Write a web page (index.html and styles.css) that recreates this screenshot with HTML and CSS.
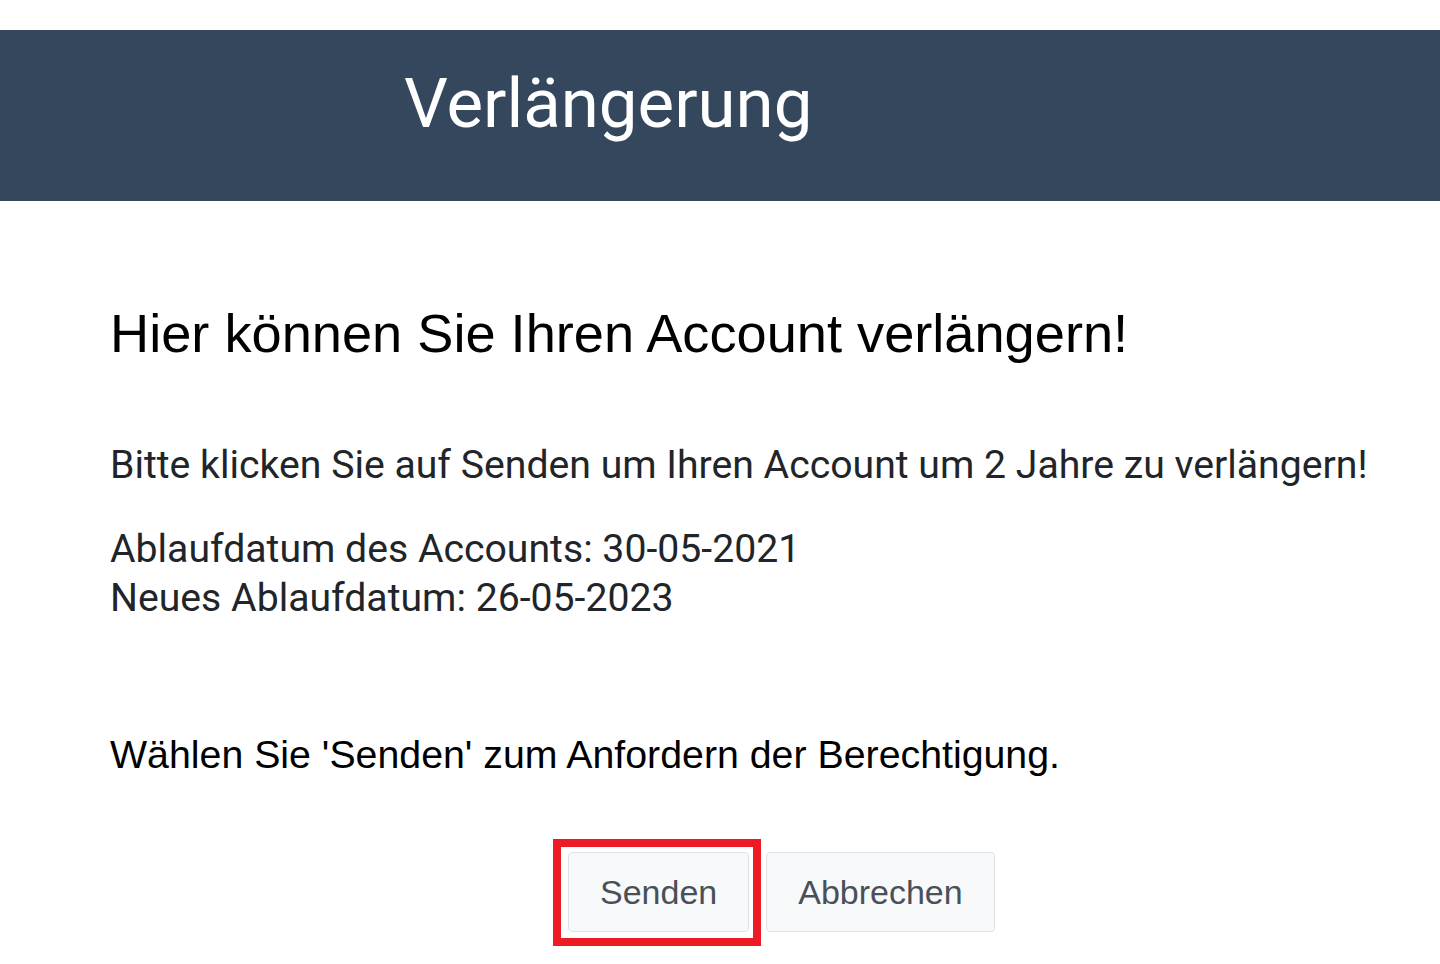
FILE: index.html
```html
<!DOCTYPE html>
<html lang="de">
<head>
    <meta charset="UTF-8">
    <meta name="viewport" content="width=device-width, initial-scale=1.0">
    <title>Verlängerung</title>
    <link rel="stylesheet" href="styles.css">
</head>
<body>
    <div class="header">
        <h1>Verlängerung</h1>
    </div>
    <div class="content">
        <h2>Hier können Sie Ihren Account verlängern!</h2>
        <p class="info">Bitte klicken Sie auf Senden um Ihren Account um 2 Jahre zu verlängern!</p>
        <p class="dates">Ablaufdatum des Accounts: 30-05-2021<br>Neues Ablaufdatum: 26-05-2023</p>
        <p class="hint">Wählen Sie 'Senden' zum Anfordern der Berechtigung.</p>
        <div class="actions">
            <div class="marked">
                <button class="btn">Senden</button>
            </div>
            <button class="btn">Abbrechen</button>
        </div>
    </div>
</body>
</html>
```

FILE: styles.css
```css
body {
    margin: 0;
    padding-top: 30px;
    background: #fff;
    font-family: Roboto, "Liberation Sans", sans-serif;
    color: #212529;
}
.header {
    background-color: #34475c;
    height: 171px;
    box-sizing: border-box;
    padding: 34px 0 0 404px;
}
.header h1 {
    margin: 0;
    font-family: Roboto, sans-serif;
    font-weight: 400;
    font-size: 69px;
    line-height: 80px;
    color: #fff;
}
.content {
    padding: 0 0 30px 110px;
}
h2 {
    margin: 101px 0 0;
    font-family: "Liberation Sans", Arial, sans-serif;
    font-weight: 400;
    font-size: 54.2px;
    line-height: 62px;
    color: #000;
}
.info, .dates {
    font-size: 39.2px;
    line-height: 49px;
}
.info {
    margin: 77px 0 0;
}
.dates {
    margin: 35px 0 0;
}
.hint {
    margin: 109px 0 0;
    font-family: "Liberation Sans", Arial, sans-serif;
    font-size: 39.3px;
    line-height: 44px;
    color: #000;
}
.actions {
    display: flex;
    gap: 17px;
    margin: 76px 0 0 458px;
}
.marked {
    position: relative;
}
.marked::after {
    content: "";
    position: absolute;
    left: -15px;
    top: -13px;
    right: -12px;
    bottom: -14px;
    border: 8px solid #ed1c24;
}
.btn {
    display: block;
    height: 80px;
    padding: 0 31px;
    font-family: "Liberation Sans", Arial, sans-serif;
    font-size: 34px;
    color: #495057;
    background: #f8f9fa;
    border: 1px solid #dee2e6;
    border-radius: 4px;
}
```
